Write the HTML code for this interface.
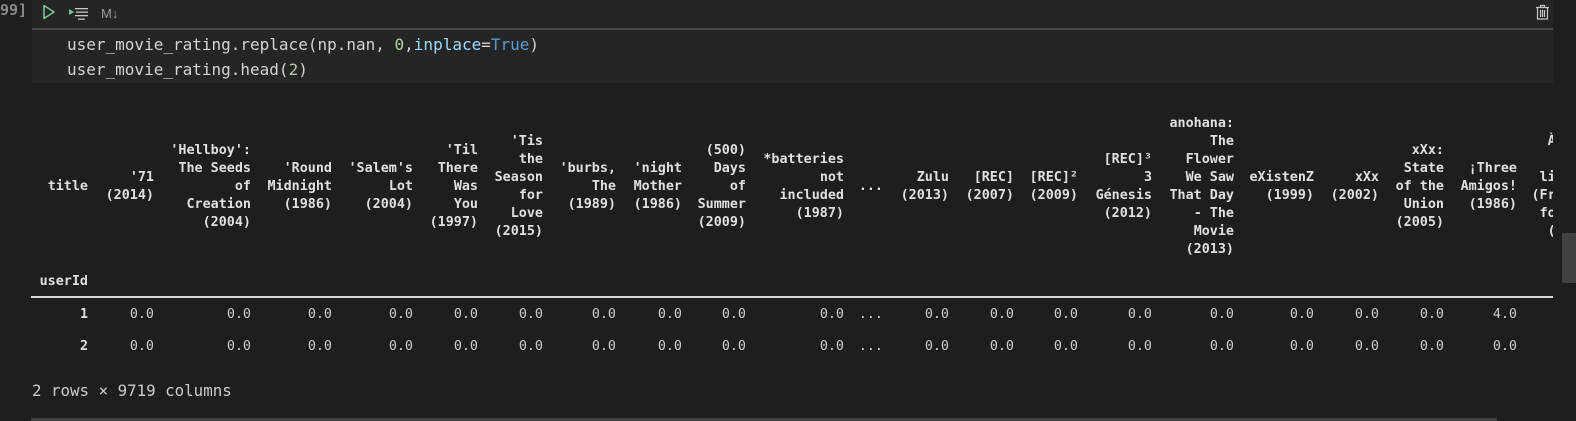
<!DOCTYPE html>
<html><head><meta charset="utf-8"><style>
html,body{margin:0;padding:0;background:#1e1e1e;width:1576px;height:421px;overflow:hidden;position:relative;font-family:"DejaVu Sans Mono","Liberation Mono",monospace;}
.cell{position:absolute;left:32px;top:0;width:1521px;height:83px;background:#252526;}
.sep{position:absolute;left:32px;top:28px;width:1521px;height:2px;background:#474747;}
.code{position:absolute;left:67px;font-size:16px;color:#d4d4d4;white-space:pre;line-height:20px;letter-spacing:0;}
.h{position:absolute;font-size:13.4px;font-weight:bold;color:#e0e0e0;line-height:18px;text-align:right;white-space:pre;transform:translateY(-50%);top:187px;}
.v{position:absolute;font-size:13.4px;color:#cccccc;line-height:32px;text-align:right;white-space:pre;top:299px;}
.clip{position:absolute;left:0;top:0;width:1553px;height:421px;overflow:hidden;}
</style></head><body>
<div class="cell"></div>
<div class="sep"></div>
<div style="position:absolute;left:0;top:1px;font-size:15px;font-weight:bold;color:#8a8a8a;">99]</div>
<svg style="position:absolute;left:40px;top:3px" width="80" height="20">
<path d="M4 2.5 L14 9 L4 15.5 Z" fill="none" stroke="#73c991" stroke-width="1.6" stroke-linejoin="round"/>
<path d="M29 6 L34 9 L29 12 Z" fill="#73c991"/>
<rect x="35" y="5" width="13" height="1.3" fill="#c5c5c5"/><rect x="36" y="8.5" width="12" height="1.3" fill="#c5c5c5"/><rect x="35" y="12" width="13" height="1.3" fill="#c5c5c5"/><rect x="38" y="15.5" width="7" height="1.3" fill="#c5c5c5"/>
<text x="61" y="15" font-family="Liberation Sans,sans-serif" font-size="13" fill="#9a9a9a">M↓</text>
</svg>
<svg style="position:absolute;left:1534px;top:3px" width="18" height="18">
<path d="M2 4.5 H15 M6.5 4.5 V2.5 H10.5 V4.5 M3.5 4.5 V16 H13.5 V4.5 M6.5 7 V14 M8.5 7 V14 M10.5 7 V14" fill="none" stroke="#c5c5c5" stroke-width="1.2"/>
</svg>
<div class="code" style="top:35px">user_movie_rating.replace(np.nan, <span style="color:#b5cea8">0</span>,<span style="color:#9cdcfe">inplace</span>=<span style="color:#569cd6">True</span>)</div>
<div class="code" style="top:60px">user_movie_rating.head(<span style="color:#b5cea8">2</span>)</div>

<div class="clip">
<div class="h" style="right:1465px">title</div>
<div class="h" style="right:1399px">'71
(2014)</div>
<div class="h" style="right:1302px">'Hellboy':
The Seeds
of
Creation
(2004)</div>
<div class="h" style="right:1221px">'Round
Midnight
(1986)</div>
<div class="h" style="right:1140px">'Salem's
Lot
(2004)</div>
<div class="h" style="right:1075px">'Til
There
Was
You
(1997)</div>
<div class="h" style="right:1010px">'Tis
the
Season
for
Love
(2015)</div>
<div class="h" style="right:937px">'burbs,
The
(1989)</div>
<div class="h" style="right:871px">'night
Mother
(1986)</div>
<div class="h" style="right:807px">(500)
Days
of
Summer
(2009)</div>
<div class="h" style="right:709px">*batteries
not
included
(1987)</div>
<div class="h" style="right:670px">...</div>
<div class="h" style="right:604px">Zulu
(2013)</div>
<div class="h" style="right:539px">[REC]
(2007)</div>
<div class="h" style="right:475px">[REC]²
(2009)</div>
<div class="h" style="right:401px">[REC]³
3
Génesis
(2012)</div>
<div class="h" style="right:319px">anohana:
The
Flower
We Saw
That Day
- The
Movie
(2013)</div>
<div class="h" style="right:239px">eXistenZ
(1999)</div>
<div class="h" style="right:174px">xXx
(2002)</div>
<div class="h" style="right:109px">xXx:
State
of the
Union
(2005)</div>
<div class="h" style="right:36px">¡Three
Amigos!
(1986)</div>
<div class="h" style="right:-43px">À nous
la
liberté
(Freedom
for Us)
(1931)</div>

<div class="h" style="right:1465px;top:282px">userId</div>
<div style="position:absolute;left:31px;top:296px;width:1530px;height:2px;background:#d8d8d8"></div>

<div class="h" style="right:1465px;top:299px;transform:none;line-height:32px">1
2</div>
<div class="v" style="right:1399px">0.0
0.0</div>
<div class="v" style="right:1302px">0.0
0.0</div>
<div class="v" style="right:1221px">0.0
0.0</div>
<div class="v" style="right:1140px">0.0
0.0</div>
<div class="v" style="right:1075px">0.0
0.0</div>
<div class="v" style="right:1010px">0.0
0.0</div>
<div class="v" style="right:937px">0.0
0.0</div>
<div class="v" style="right:871px">0.0
0.0</div>
<div class="v" style="right:807px">0.0
0.0</div>
<div class="v" style="right:709px">0.0
0.0</div>
<div class="v" style="right:670px">...
...</div>
<div class="v" style="right:604px">0.0
0.0</div>
<div class="v" style="right:539px">0.0
0.0</div>
<div class="v" style="right:475px">0.0
0.0</div>
<div class="v" style="right:401px">0.0
0.0</div>
<div class="v" style="right:319px">0.0
0.0</div>
<div class="v" style="right:239px">0.0
0.0</div>
<div class="v" style="right:174px">0.0
0.0</div>
<div class="v" style="right:109px">0.0
0.0</div>
<div class="v" style="right:36px">4.0
0.0</div>
</div>

<div style="position:absolute;left:32px;top:380px;font-size:15.8px;color:#cccccc;line-height:22px">2 rows × 9719 columns</div>
<div style="position:absolute;left:31px;top:418px;width:1466px;height:3px;background:#424242"></div>
<div style="position:absolute;left:1562px;top:233px;width:14px;height:50px;background:#424242"></div>
</body></html>
